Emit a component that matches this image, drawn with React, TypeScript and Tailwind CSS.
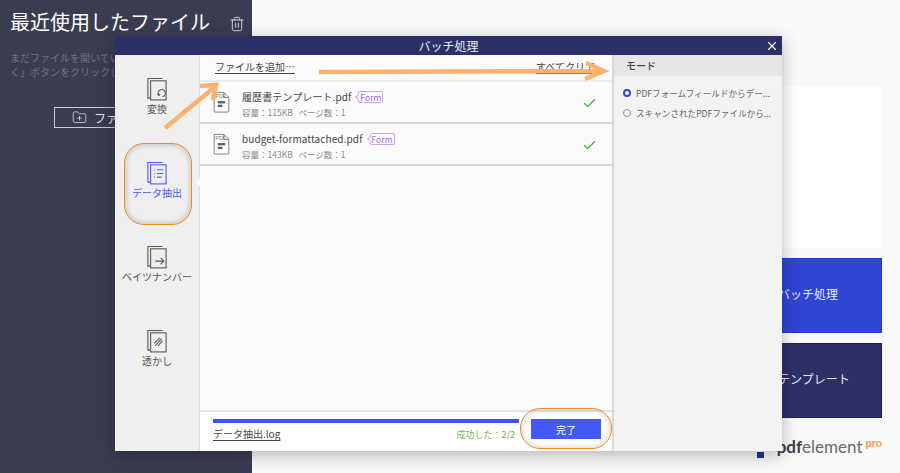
import React from 'react';
import { Trash2, FolderPlus, X, Check } from 'lucide-react';

const jp = 'font-["Noto_Sans_CJK_JP","Noto_Sans",sans-serif]';

const PageStack: React.FC<{ color: string; children?: React.ReactNode }> = ({ color, children }) => (
  <svg width="20" height="24" viewBox="0 0 22 25" fill="none" stroke={color} strokeWidth="1.200">
    <path d="M3.500 22.500H1V1H17" />
    <rect x="4" y="3.500" width="17" height="21" fill="transparent" />
    {children}
  </svg>
);

const sideItems: { label: string; active?: boolean; glyph: React.ReactNode }[] = [
  {
    label: '変換',
    glyph: <path d="M17 21a4 4 0 1 0-4-1.500M11.500 18l1.500 1.500 1.500-1.500" />,
  },
  {
    label: 'データ抽出',
    active: true,
    glyph: <path d="M8 9h1M8 13h1M8 17h1M11 9h7M11 13h7M11 17h5" />,
  },
  {
    label: 'ベイツナンバー',
    glyph: <path d="M9 17h9M15 13.500l3.500 3.500-3.500 3.500" />,
  },
  {
    label: '透かし',
    glyph: <path d="M8 15l6-6M9 18l7-8M12 18l5-6" />,
  },
];

const files = [
  { name: '履歴書テンプレート.pdf', size: '115KB' },
  { name: 'budget-formattached.pdf', size: '143KB' },
];

const FileIcon = () => (
  <svg width="17" height="22" viewBox="0 0 18 24" fill="none" className="shrink-0">
    <path d="M1 1.500H11.500L17 7V22a1 1 0 0 1-1 1H2a1 1 0 0 1-1-1Z" stroke="#77787c" strokeWidth="1" fill="#fbfbfb" />
    <path d="M11.500 1.500V7H17" stroke="#77787c" strokeWidth="1" />
    <text x="2.500" y="7.500" fontSize="5.500" fill="#77787c" fontFamily="Liberation Sans, sans-serif">PDF</text>
    <rect x="5" y="11" width="8" height="2.500" fill="#5c5d60" />
    <rect x="5" y="15" width="5" height="2.500" fill="#5c5d60" />
  </svg>
);

export default function App() {
  return (
    <div className={`relative flex h-[473px] w-[900px] overflow-hidden bg-[#f9f9f9] ${jp}`}>
      <aside className="w-[252px] shrink-0 bg-[#3a3d52] pl-[10px] pt-[8px]">
        <div className="flex items-center">
          <h1 className="whitespace-nowrap text-[20px] leading-[28px] text-white">最近使用したファイル</h1>
          <Trash2 size={16} strokeWidth={1.300} className="ml-[19px] mt-[4px] shrink-0 text-[#e6e6ea]" />
        </div>
        <p className="mt-[15px] w-[222px] text-[10px] leading-[14px] text-[#6d7082]">
          まだファイルを開いていません。「ファイルを開く」ボタンをクリックしてください
        </p>
        <div className="ml-[44px] mt-[28px] flex h-[21px] w-[170px] items-center border border-[#c9cad0] pl-[17px] text-[12px] text-[#e4e4e8]">
          <FolderPlus size={15} strokeWidth={1.200} className="mr-[7px]" />
          ファイルを開く
        </div>
      </aside>

      <main className="flex-1">
        <div className="ml-[300px] mt-[86px] flex w-[330px] flex-col">
          <div className="h-[162px] bg-white" />
          <div className="mt-[10px] flex h-[75px] items-center border border-[#2438c8] bg-[#2f45d3] pb-[4px] pl-[225px] text-[12px] text-[#e8eafc]">バッチ処理</div>
          <div className="mt-[10px] flex h-[75px] items-center border border-[#1d2358] bg-[#2b3166] pb-[4px] pl-[225px] text-[12px] text-[#e4e5f0]">テンプレート</div>
          <div className="ml-[205px] mt-[17px] flex items-start font-['Lato',sans-serif] text-[17px] leading-[24px] text-[#67686c]">
            <span className="mr-[13px] mt-[17px] h-[6px] w-[8px] bg-[#20309c]" />
            <span><b className="text-[#3f4044]">pdf</b>element</span>
            <span className="ml-[3px] mt-[1px] text-[11px] font-bold leading-[14px] text-[#f6a13c]">pro</span>
          </div>
        </div>
      </main>

      <section className="absolute left-[115px] top-[36px] flex h-[415px] w-[667px] flex-col bg-white shadow-[0_4px_16px_rgba(0,0,0,0.28)]">
        <header className="relative flex h-[19px] shrink-0 items-center justify-center bg-[#2b3166] text-[12px] text-[#eceef8]">
          バッチ処理
          <X size={14} strokeWidth={2} className="absolute right-[3px] top-[3px] text-white" />
        </header>

        <div className="flex min-h-0 flex-1">
          <nav className="w-[85px] shrink-0 border-r border-[#e2e2e2] bg-[#efefef] pt-[22px]">
            {sideItems.map((item) => (
              <div
                key={item.label}
                className={`relative flex h-[84px] flex-col items-center whitespace-nowrap text-[10px] leading-[14px] ${item.active ? 'text-[#4a5cf0]' : 'text-[#555555]'}`}
              >
                <PageStack color={item.active ? '#4a5cf0' : '#55565a'}>{item.glyph}</PageStack>
                <span className="mt-[1px]">{item.label}</span>
                {item.active && <span className="absolute right-[-3px] top-[19px] h-[5px] w-[5px] rotate-45 bg-white" />}
              </div>
            ))}
          </nav>

          <div className="flex min-w-0 flex-1 flex-col bg-[#fbfbfb]">
            <div className="flex h-[27px] shrink-0 items-center justify-between border-b-2 border-[#ececec] pb-[2px] pl-[15px] pr-[17px] text-[10px] text-[#444444]">
              <span className="underline underline-offset-2">ファイルを追加…</span>
              <span className="underline underline-offset-2">すべてクリア</span>
            </div>
            {files.map((file) => (
              <div key={file.name} className="flex h-[42px] shrink-0 items-center border-b-2 border-[#d6d6d6] pl-[13px] pr-[15px]">
                <FileIcon />
                <div className="ml-[12px] flex-1 pt-[3px]">
                  <div className="flex items-center text-[10px] leading-[16px] tracking-[0.1px] text-[#444444]">
                    {file.name}
                    <span className="relative ml-[7px] flex h-[12px] w-[25px] items-center justify-center rounded-[2px] border border-[#c9a6f5] bg-white text-[8.500px] text-[#9a5ef0]">
                      <span className="absolute left-[-3px] top-[3px] h-[4px] w-[4px] rotate-45 border-b border-l border-[#c9a6f5] bg-white" />
                      Form
                    </span>
                  </div>
                  <div className="mt-[1px] text-[8.500px] leading-[13px] text-[#8a8a8a]">
                    容量：{file.size}&nbsp;&nbsp;&nbsp;ページ数：1
                  </div>
                </div>
                <Check size={15} strokeWidth={2.200} className="mt-[2px] text-[#4fa83d]" />
              </div>
            ))}
            <div className="flex-1" />
            <footer className="flex h-[41px] shrink-0 border-t-2 border-[#e4e4e4] bg-white pl-[13px] pr-[11px]">
              <div className="w-[306px] pt-[7px]">
                <div className="h-[4px] bg-[#3c50f5]" />
                <div className="mt-[3px] flex items-center justify-between pr-[4px]">
                  <span className="text-[10px] leading-[14px] text-[#444444] underline underline-offset-2">データ抽出.log</span>
                  <span className="mt-[2px] text-[9px] leading-[14px] text-[#7ab648]">成功した：2/2</span>
                </div>
              </div>
              <button className="ml-[12px] mt-[7px] h-[20px] w-[70px] bg-[#4258f7] text-[10px] text-white">完了</button>
            </footer>
          </div>

          <div className="w-[170px] shrink-0 border-l-2 border-[#d9d9d9] bg-[#f3f3f3]">
            <div className="flex h-[21px] items-center bg-[#e6e6e6] pl-[12px] text-[10px] font-medium text-[#444444]">モード</div>
            <div className="space-y-[6px] pl-[9px] pt-[10px] text-[8.600px] leading-[14px] text-[#666666]">
              <div className="flex items-center whitespace-nowrap">
                <span className="mr-[5px] h-[8px] w-[8px] shrink-0 rounded-full border-2 border-[#2f45e8] bg-white" />
                PDFフォームフィールドからデー...
              </div>
              <div className="flex items-center whitespace-nowrap">
                <span className="mr-[5px] h-[8px] w-[8px] shrink-0 rounded-full border border-[#888888] bg-white" />
                スキャンされたPDFファイルから...
              </div>
            </div>
          </div>
        </div>
      </section>

      {/* annotations drawn on top of the screenshot */}
      <div className="absolute left-[124px] top-[143px] h-[82px] w-[68px] rounded-[20px] border-[1.500px] border-[#f28a1e] shadow-[inset_0_0_4px_2px_rgba(0,0,0,0.15)]" />
      <div className="absolute left-[520px] top-[408px] h-[41px] w-[92px] rounded-[20px] border-[1.500px] border-[#f28a1e] shadow-[inset_0_0_4px_2px_rgba(0,0,0,0.12)]" />
      <svg className="absolute left-0 top-0" width="900" height="473" fill="none" stroke="#fbb26f" strokeWidth="4.500">
        <path d="M165 128L216 86M200 86L216 85L213 100" />
        <path d="M319 72L603 71M586 63L604 71L585 79" />
      </svg>
    </div>
  );
}
